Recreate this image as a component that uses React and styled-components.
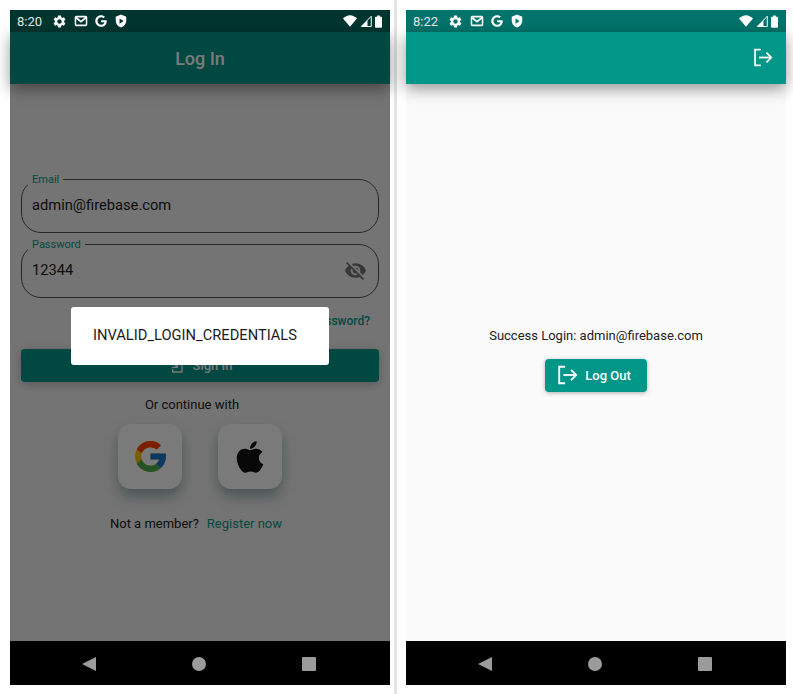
import React from "react";
import styled, { createGlobalStyle } from "styled-components";
import { MdSettings, MdVisibilityOff } from "react-icons/md";
import { FaGoogle, FaApple } from "react-icons/fa";
import { FcGoogle } from "react-icons/fc";

const GlobalStyle = createGlobalStyle`
  html, body {
    margin: 0;
    padding: 0;
    background: #fff;
  }
  * {
    box-sizing: border-box;
  }
`;

const MailIcon = () => (
  <svg width="14" height="14" viewBox="0 0 24 24" fill="none" stroke="#fff">
    <rect x="2.500" y="4.500" width="19" height="15" rx="1.500" strokeWidth="2.600" />
    <path d="M3 6l9 7 9-7" strokeWidth="3" />
  </svg>
);

const ShieldIcon = () => (
  <svg width="14" height="14" viewBox="0 0 24 24" fill="#fff">
    <path
      fillRule="evenodd"
      d="M12 1 3 4.500v6.500c0 5.600 3.800 10.700 9 12 5.200-1.300 9-6.400 9-12V4.500L12 1zm-2.500 6.500 7 4.500-7 4.500v-9z"
    />
  </svg>
);

const WifiIcon = () => (
  <svg width="14" height="12" viewBox="0 0 24 20" fill="#fff">
    <path d="M12 20 0 5.500C3.300 2.300 7.500 0 12 0s8.700 2.300 12 5.500L12 20z" />
  </svg>
);

const SignalIcon = () => (
  <svg width="12" height="12" viewBox="0 0 24 24">
    <path d="M22.500 2.500V23H2.500L22.500 2.500z" fill="none" stroke="#fff" strokeWidth="2" />
    <path d="M15 10.500V23H2.500L15 10.500z" fill="#fff" />
  </svg>
);

const BatteryIcon = () => (
  <svg width="7" height="13" viewBox="0 0 8 14" fill="#fff">
    <path d="M2.500 0h3v1.500H7a1 1 0 0 1 1 1V13a1 1 0 0 1-1 1H1a1 1 0 0 1-1-1V2.500a1 1 0 0 1 1-1h1.500V0z" />
  </svg>
);

const LogOutIcon = ({ size }) => (
  <svg width={size} height={size} viewBox="0 0 24 24" fill="none" stroke="currentColor" strokeWidth="2">
    <path d="M10 3H3.500v18H10" />
    <path d="M8 12h14" />
    <path d="M16.500 6.500 22 12l-5.500 5.500" />
  </svg>
);

const SignInIcon = () => (
  <svg width="16" height="16" viewBox="0 0 24 24" fill="none" stroke="currentColor" strokeWidth="2">
    <path d="M11 3h10v18H7v-5" />
    <path d="M2 2l12 12" />
    <path d="M14 6v8H6" />
  </svg>
);

const NavIcons = () => (
  <NavBar>
    <svg width="14" height="14" viewBox="0 0 14 14" fill="#9b9b9b">
      <path d="M14 0v14L0 7z" />
    </svg>
    <NavCircle />
    <NavSquare />
  </NavBar>
);

const Status = ({ time, dim }) => (
  <StatusBar $dim={dim}>
    <Time>{time}</Time>
    <StatusIcons>
      <MdSettings size={15} />
      <MailIcon />
      <FaGoogle size={12} />
      <ShieldIcon />
    </StatusIcons>
    <SystemIcons>
      <WifiIcon />
      <SignalIcon />
      <BatteryIcon />
    </SystemIcons>
  </StatusBar>
);

export default function App() {
  return (
    <Page>
      <GlobalStyle />
      <Phone>
        <Status time="8:20" dim />
        <Screen>
          <AppBar>
            <Title>Log In</Title>
          </AppBar>
          <LoginBody>
            <Field>
              <FieldLabel>Email</FieldLabel>
              <FieldValue>admin@firebase.com</FieldValue>
            </Field>
            <Field>
              <FieldLabel>Password</FieldLabel>
              <FieldValue>12344</FieldValue>
              <MdVisibilityOff size={23} color="#757575" />
            </Field>
            <Forgot>Forgot Password?</Forgot>
            <SignInButton>
              <SignInIcon />
              Sign In
            </SignInButton>
            <ContinueText>Or continue with</ContinueText>
            <SocialRow>
              <SocialCard>
                <FcGoogle size={37} />
              </SocialCard>
              <SocialCard>
                <FaApple size={36} color="#111" />
              </SocialCard>
            </SocialRow>
            <MemberRow>
              Not a member?
              <RegisterLink>Register now</RegisterLink>
            </MemberRow>
          </LoginBody>
          <Scrim />
          <Dialog>INVALID_LOGIN_CREDENTIALS</Dialog>
        </Screen>
        <NavIcons />
      </Phone>
      <Divider />
      <Phone>
        <Status time="8:22" />
        <Screen>
          <AppBar $raised>
            <LogOutIcon size={21} />
          </AppBar>
          <SuccessBody>
            <SuccessText>Success Login: admin@firebase.com</SuccessText>
            <LogOutButton>
              <LogOutIcon size={22} />
              Log Out
            </LogOutButton>
          </SuccessBody>
        </Screen>
        <NavIcons />
      </Phone>
    </Page>
  );
}

const Page = styled.div`
  display: flex;
  width: 793px;
  height: 694px;
  padding-left: 10px;
  overflow: hidden;
  font-family: Roboto, "Liberation Sans", sans-serif;
  background: #fff;
`;

const Divider = styled.div`
  width: 3px;
  margin: 0 9px 0 4px;
  background: #e4e4e4;
`;

const Phone = styled.div`
  display: flex;
  flex-direction: column;
  width: 380px;
  height: 675px;
  margin-top: 10px;
`;

const StatusBar = styled.div`
  display: flex;
  align-items: center;
  height: 22px;
  padding: 0 8px 0 7px;
  color: #fff;
  background: ${(p) => (p.$dim ? "#00352f" : "#00736a")};
`;

const Time = styled.span`
  width: 35px;
  font-size: 13px;
  color: #e6e6e6;
`;

const StatusIcons = styled.div`
  display: flex;
  align-items: center;
  gap: 7px;
`;

const SystemIcons = styled.div`
  display: flex;
  align-items: center;
  gap: 3px;
  margin-left: auto;
`;

const Screen = styled.div`
  position: relative;
  display: flex;
  flex: 1;
  flex-direction: column;
  background: #fafafa;
`;

const AppBar = styled.div`
  position: relative;
  z-index: 1;
  display: flex;
  flex-shrink: 0;
  align-items: center;
  justify-content: ${(p) => (p.$raised ? "flex-end" : "center")};
  height: 52px;
  padding: ${(p) => (p.$raised ? "0 13px 1px" : "1px 13px 0")};
  color: #fff;
  background: #009688;
  box-shadow: 0 5px 14px rgba(0, 0, 0, 0.4);
`;

const Title = styled.h1`
  margin: 0;
  font-size: 18px;
  font-weight: 500;
  color: #fff;
`;

const LoginBody = styled.div`
  display: flex;
  flex: 1;
  flex-direction: column;
  padding: 95px 11px 0;
  background: #f2f2f2;
`;

const Field = styled.div`
  position: relative;
  display: flex;
  flex-shrink: 0;
  align-items: center;
  justify-content: space-between;
  height: 54px;
  margin-bottom: 11px;
  padding: 0 11px 2px 10px;
  border: 1px solid #555;
  border-radius: 20px;
`;

const FieldLabel = styled.label`
  position: absolute;
  top: -7px;
  left: 6px;
  padding: 0 4px;
  font-size: 11px;
  line-height: 13px;
  color: #0a9a8c;
  background: #f2f2f2;
`;

const FieldValue = styled.span`
  font-size: 14.700px;
  color: #1c1c1c;
`;

const Forgot = styled.div`
  margin-top: 5px;
  padding-right: 9px;
  font-size: 12px;
  line-height: 14px;
  font-weight: 500;
  text-align: right;
  color: #0a9a8c;
`;

const SignInButton = styled.div`
  display: flex;
  flex-shrink: 0;
  align-items: center;
  justify-content: center;
  gap: 9px;
  height: 33px;
  margin-top: 21px;
  border-radius: 4px;
  font-size: 13px;
  font-weight: 500;
  color: #fff;
  background: #009688;
  box-shadow: 0 2px 8px rgba(0, 0, 0, 0.25);
`;

const ContinueText = styled.div`
  margin-top: 15px;
  padding-right: 16px;
  font-size: 13px;
  line-height: 15px;
  text-align: center;
  color: #222;
`;

const SocialRow = styled.div`
  display: flex;
  justify-content: center;
  gap: 36px;
  margin-top: 12px;
`;

const SocialCard = styled.div`
  display: flex;
  align-items: center;
  justify-content: center;
  width: 64px;
  height: 65px;
  border-radius: 13px;
  background: #fff;
  box-shadow: 0 8px 14px rgba(0, 70, 60, 0.35);
`;

const MemberRow = styled.div`
  display: flex;
  justify-content: center;
  gap: 8px;
  margin-top: 27px;
  padding-right: 8px;
  font-size: 13px;
  line-height: 15px;
  color: #222;
`;

const RegisterLink = styled.span`
  color: #0a9a8c;
`;

const Scrim = styled.div`
  position: absolute;
  inset: 0;
  z-index: 2;
  background: rgba(0, 0, 0, 0.52);
`;

const Dialog = styled.div`
  position: absolute;
  top: 275px;
  left: 61px;
  z-index: 3;
  width: 258px;
  height: 58px;
  padding-left: 22px;
  border-radius: 3px;
  font-size: 14.700px;
  line-height: 56px;
  white-space: nowrap;
  color: #1c1c1c;
  background: #fff;
`;

const SuccessBody = styled.div`
  display: flex;
  flex: 1;
  flex-direction: column;
  align-items: center;
  justify-content: center;
  gap: 16px;
  padding-bottom: 6px;
`;

const SuccessText = styled.div`
  font-size: 13px;
  line-height: 15px;
  color: #222;
`;

const LogOutButton = styled.div`
  display: flex;
  align-items: center;
  gap: 7px;
  height: 33px;
  padding: 0 16px 0 11px;
  border-radius: 4px;
  font-size: 13px;
  font-weight: 500;
  color: #fff;
  background: #009688;
  box-shadow: 0 1px 4px rgba(0, 0, 0, 0.3);
`;

const NavBar = styled.div`
  display: flex;
  flex-shrink: 0;
  align-items: center;
  justify-content: space-between;
  height: 44px;
  padding: 2px 74px 0 72px;
  background: #000;
`;

const NavCircle = styled.div`
  width: 14px;
  height: 14px;
  border-radius: 50%;
  background: #9b9b9b;
`;

const NavSquare = styled.div`
  width: 14px;
  height: 14px;
  border-radius: 1px;
  background: #9b9b9b;
`;
